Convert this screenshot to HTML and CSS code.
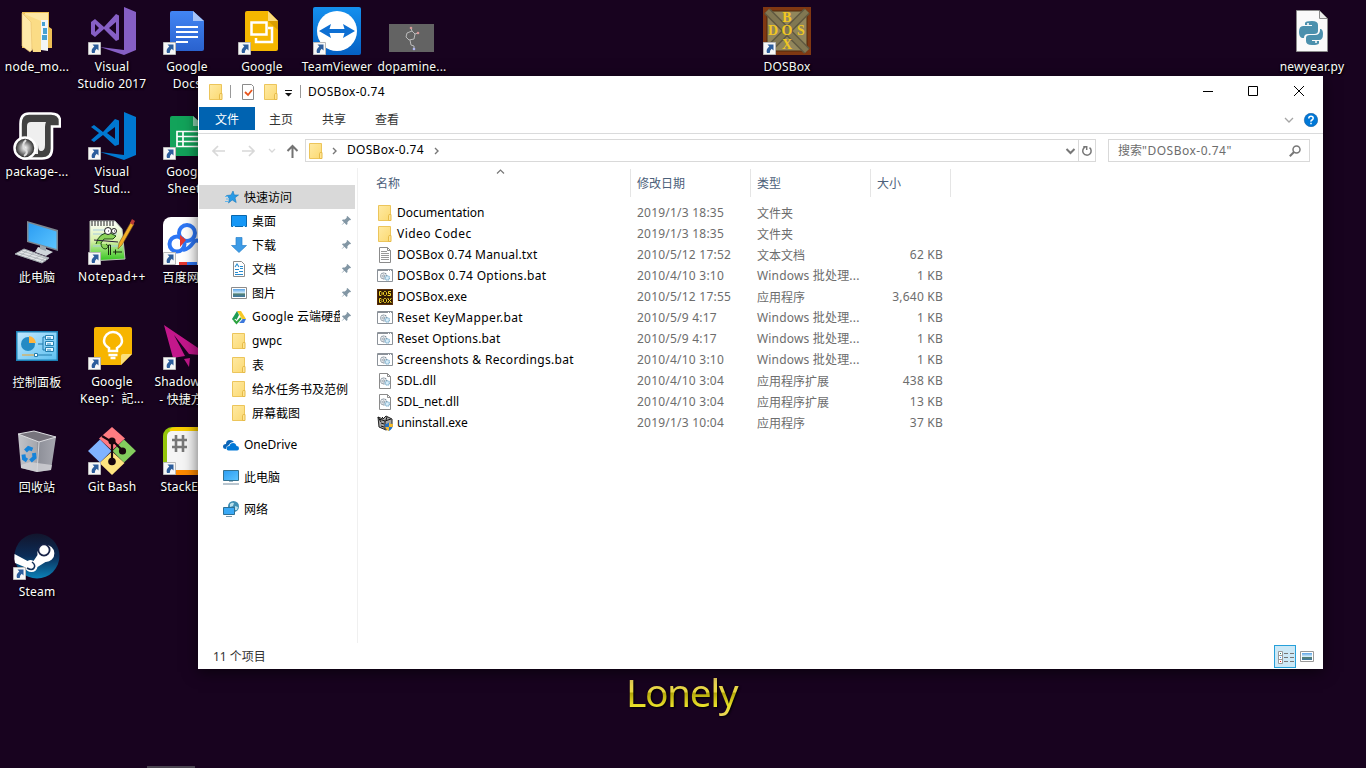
FILE: index.html
```html
<!DOCTYPE html>
<html lang="zh-CN">
<head>
<meta charset="utf-8">
<title>DOSBox-0.74</title>
<link rel="stylesheet" href="styles.css">
</head>
<body>
<svg class="defs" aria-hidden="true">
<defs>
<linearGradient id="gFold" x1="0" y1="0" x2="1" y2="1"><stop offset="0" stop-color="#ffeaa3"/><stop offset="1" stop-color="#fbd972"/></linearGradient>
<linearGradient id="gScreen" x1="0" y1="0" x2="1" y2="1"><stop offset="0" stop-color="#2b9cf2"/><stop offset="1" stop-color="#5cc5ff"/></linearGradient>
<linearGradient id="gDoc" x1="0" y1="0" x2="0" y2="1"><stop offset="0" stop-color="#4285f4"/><stop offset="1" stop-color="#2a62ce"/></linearGradient>
<linearGradient id="gTv" x1="0" y1="0" x2="0" y2="1"><stop offset="0" stop-color="#1490ee"/><stop offset="1" stop-color="#0560c4"/></linearGradient>
<linearGradient id="gSteam" x1="0" y1="0" x2="0" y2="1"><stop offset="0" stop-color="#12152c"/><stop offset=".5" stop-color="#0b2c57"/><stop offset="1" stop-color="#0b82b8"/></linearGradient>
<linearGradient id="gNpp" x1="0" y1="0" x2="0" y2="1"><stop offset="0" stop-color="#fff"/><stop offset=".5" stop-color="#d8f0a8"/><stop offset="1" stop-color="#2fc51c"/></linearGradient>
<linearGradient id="gPanel" x1="0" y1="0" x2="1" y2="1"><stop offset="0" stop-color="#bfe8ff"/><stop offset="1" stop-color="#5fc0f0"/></linearGradient>
<linearGradient id="gBin" x1="0" y1="0" x2="1" y2="0"><stop offset="0" stop-color="#c3c4c9"/><stop offset=".5" stop-color="#a5a7ae"/><stop offset=".52" stop-color="#8d8f98"/><stop offset="1" stop-color="#a6a7af"/></linearGradient>
<radialGradient id="gDisc"><stop offset="0" stop-color="#fff"/><stop offset=".45" stop-color="#999"/><stop offset="1" stop-color="#111"/></radialGradient>
<linearGradient id="gPic" x1="0" y1="0" x2="0" y2="1"><stop offset="0" stop-color="#5aa3e6"/><stop offset=".5" stop-color="#d4ecfa"/><stop offset=".6" stop-color="#55806f"/><stop offset="1" stop-color="#3f78a6"/></linearGradient>
<symbol id="arrow" viewBox="0 0 13 13"><path d="M.5.5h12v12H.5z" fill="#f7f7f7" stroke="#b9b9b9"/><path d="M4.500 2.500h6v6L8.700 6.700Q6.800 8.100 6.700 11H4q-1.400-4 2.300-6.600z" fill="#2c5d9c"/></symbol>
<symbol id="folder" viewBox="0 0 16 16"><path d="M1.500.5h12v15h-12z" fill="url(#gFold)" stroke="#ecc55b"/><path d="M11.500 15.500v-5q0-1 1.500-1h1v6z" fill="#ffe595" stroke="#e6bb48"/></symbol>
<symbol id="txt" viewBox="0 0 16 16"><path d="M2.500.5h8l3 3v12h-11z" fill="#fff" stroke="#8b8b8b"/><path d="M10.500.5v3h3" fill="none" stroke="#8b8b8b"/><path d="M4 4.500h6M4 6.500h8M4 8.500h8M4 10.500h8M4 12.500h8" stroke="#999"/></symbol>
<symbol id="gear" viewBox="0 0 10 8"><circle cx="3.800" cy="3.500" r="2.700" fill="#f4f6f8" stroke="#7d8a96" stroke-width="1.100" stroke-dasharray="1.200 .5"/><circle cx="3.800" cy="3.500" r="1" fill="none" stroke="#7d8a96" stroke-width=".7"/><circle cx="7" cy="5.300" r="2" fill="#d8ecf8" stroke="#7fb0cd" stroke-width="1.100" stroke-dasharray="1 .4"/></symbol>
<symbol id="bat" viewBox="0 0 16 16"><path d="M.5 1.500h15v12H.5z" fill="#fff" stroke="#8c9299"/><path d="M1 2.500h14" stroke="#8c9299"/><path d="M11 2.500h1M13 2.500h1" stroke="#fff"/><use href="#gear" x="2.500" y="4" width="11" height="9"/></symbol>
<symbol id="dll" viewBox="0 0 16 16"><path d="M2.500.5h8l3 3v12h-11z" fill="#fff" stroke="#8b8b8b"/><path d="M10.500.5v3h3" fill="none" stroke="#8b8b8b"/><use href="#gear" x="2.500" y="4" width="11" height="9"/></symbol>
<symbol id="dosmini" viewBox="0 0 16 16"><path d="M0 0h16v16H0z" fill="#5b2f08"/><path d="M1 1h14v14H1z" fill="#321b04"/><path d="M2.500 2.500v4h1.500l1-1v-2l-1-1zM7.500 2.500h1l1 1v2l-1 1h-1l-1-1v-2zM14 2.500h-2.500v2H13.500v2h-3M2.500 9.500v4h1.500l1-1-1-1 1-1-1-1zM7.500 9.500h1l1 1v2l-1 1h-1l-1-1v-2zM11 9v1l3 3v1M14 9v1l-3 3v1" fill="none" stroke="#f4d62a"/></symbol>
<symbol id="uninst" viewBox="0 0 16 16"><path d="M1 2l5 2 3-3 6 3v8l-6 3-7-3z" fill="#a5a5a5" stroke="#222"/><path d="M2 4l6 2 6-2M8 6v8M1 2l3 5M4 8l3 1M4 11l3 1M5 2l2 2M10 2l-1 3" stroke="#151515" fill="none"/><path d="M8 9q2 0 4-1.500Q13.500 9 16 9q0 5-4 7-4-2-4-7z" fill="#2472c8"/><path d="M12 7.500Q13.500 9 16 9l-.3 3H12zM8.300 12H12v4q-3-1-3.700-4z" fill="#f7bb2a"/></symbol>
<symbol id="pin" viewBox="0 0 12 12"><path d="M7 1l4 4-1 .8-1-.2-2 2.200.1 2L6 11 3.700 8.500 1 11 .7 10.800 3.200 8 1 5.700 2.100 4.800l2.100.1L6.300 3l-.2-1.200z" fill="#8296a4"/></symbol>
<symbol id="pc" viewBox="0 0 16 16"><path d="M.5 1.500h15v10H.5z" fill="url(#gScreen)" stroke="#35718f"/><path d="M6 12h4v1H6z" fill="#9fb9c6"/><path d="M0 15h16" stroke="#8b9eb0" stroke-width="1.200"/></symbol>
<symbol id="picture" viewBox="0 0 16 16"><path d="M.5 2.500h15v11H.5z" fill="#fff" stroke="#8b8b8b"/><path d="M2 4h12v8H2z" fill="url(#gPic)"/></symbol>
</defs>
</svg>

<main class="desktop">
  <div class="item" style="grid-area:1/1"><svg class="big" viewBox="0 0 48 48"><path d="M9 5h27v15l3 2v19H9z" fill="#eebf55"/><path d="M12 6h23v33H12z" fill="#ffe8a5"/><path d="M28 13h7v31l-7-1z" fill="#f2f5f7"/><path d="M29 15h3v4h-3zM30 21h4v6h-4zM29 28h5v5h-5z" fill="#46a1d2"/><path d="M9 6l19 8v31h-8z" fill="#fbdc86"/><path d="M9 6l9 9 1 28-2 2-8-6z" fill="#ffe9a9" stroke="#e9c069" stroke-width=".6"/></svg><p>node_mo...</p></div>
  <div class="item" style="grid-area:2/1"><svg class="big" viewBox="0 0 48 48"><path d="M16 1.500H38q9 0 9 8V14.500H39v22q0 10-10 10H11q-3.500 0-3.500-4V12q0-10.500 8.500-10.500z" fill="#424242" stroke="#fff" stroke-width="2.600"/><path d="M14 14q0-4 4-4h15q-1 2-1 5v18q0 6-4 6-3 0-3-6v9H14z" fill="#efefef"/><circle cx="12" cy="36" r="10.500" fill="url(#gDisc)" stroke="#fff" stroke-width="2.500"/><path d="M13 28q-5 5-1 9t-1 7" fill="none" stroke="#ddd" stroke-width="2"/></svg><p>package-...</p></div>
  <div class="item" style="grid-area:3/1"><svg class="big" viewBox="0 0 48 48"><path d="M14 4l31 9v21L14 25z" fill="#7c8790"/><path d="M15.500 6l28 8.500v17.500l-28-8z" fill="url(#gScreen)"/><path d="M25 30l8 2 7 3-7 4-11-4z" fill="#cfd6da"/><path d="M27 28l6 2v4l-6-2z" fill="#9ca7ad"/><path d="M11 32l25 9-7 5-27-9z" fill="#e2e4e6" stroke="#9da5aa"/><path d="M6 36l27 8M9 34l26 8M7 39l8-6M14 41l8-6M20 43l8-5M27 45l6-5" stroke="#a7aeb3" stroke-width=".8"/></svg><p class="zh">此电脑</p></div>
  <div class="item" style="grid-area:4/1"><svg class="big" viewBox="0 0 48 48"><path d="M3 9h42v30H3z" fill="#1d81b7"/><path d="M4.500 10.500h39v27h-39z" fill="url(#gPanel)"/><circle cx="15" cy="22" r="7" fill="#238ac4"/><path d="M16 21v-7q6 1 7 7z" fill="#ffb53d"/><path d="M25 22h5v-7h4M30 22v6h4" fill="none" stroke="#1c79ad"/><path d="M32.500 13.500h8v4h-8zM32.500 19.500h8v4h-8zM32.500 25.500h8v4h-8z" fill="#e9f7ff" stroke="#247fae"/><path d="M34 16h4M34 22h4M34 28h4" stroke="#1684c0"/><path d="M9 33h12" stroke="#f0a22a"/><path d="M24 33h15" stroke="#247fae"/><path d="M21.500 31.500h3v3h-3z" fill="#fff" stroke="#247fae"/></svg><p class="zh">控制面板</p></div>
  <div class="item" style="grid-area:5/1"><svg class="big" viewBox="0 0 48 48"><path d="M5 7l38 3-5 33-14 2-16-4z" fill="url(#gBin)"/><path d="M5 7l16-3 22 6-17 5z" fill="#77747d" stroke="#dddde1"/><path d="M26 15l-2 30" stroke="#d4d5da"/><path d="M8 38l9-3 22 3-1 5-14 2-16-4z" fill="#d5d6d9" opacity=".75"/><g fill="none" stroke="#1684da" stroke-width="4"><path d="M12.500 24l3-3 4 1.500"/><path d="M21 26l.500 4.500-4 3.500"/><path d="M14 33.500l-3-2-.5-4"/></g></svg><p class="zh">回收站</p></div>
  <div class="item" style="grid-area:6/1"><svg class="big" viewBox="0 -2 48 48"><circle cx="24" cy="22" r="22.500" fill="url(#gSteam)"/><path d="M1.500 20l13 7q3-2 6 0l4-6a8.500 8.500 0 1 1 8 7l-8 5q-1 5-6 5-5 0-7-5L2 29q-1-4-.5-9z" fill="#fff"/><circle cx="31" cy="16" r="5.600" fill="#fff" stroke="#172348" stroke-width="1.800"/><path d="M14 34q5 3 7 0t-2-6" fill="none" stroke="#12315a" stroke-width="1.500"/></svg><svg class="cut"><use href="#arrow"/></svg><p>Steam</p></div>

  <div class="item" style="grid-area:1/2"><svg class="big" viewBox="0 0 48 48"><path d="M36 0l12 5v38l-12 5-24-8 24 3zM3 15l4-3 9 8L28 7l3 1.500v24L28 34 16 22l-9 8-4-3zM7 17v8l4-4zM28 15l-7 6 7 6z" fill="#865fc5" fill-rule="evenodd"/></svg><svg class="cut"><use href="#arrow"/></svg><p>Visual<br>Studio 2017</p></div>
  <div class="item" style="grid-area:2/2"><svg class="big" viewBox="0 0 48 48"><path d="M36 0l12 5v38l-12 5-24-8 24 3zM3 15l3-2 9 7L27 7l4 1.500v24L27 34 15 23l-9 7-3-2 8-7zM27 15l-8 6 8 6z" fill="#0078d0" fill-rule="evenodd"/></svg><svg class="cut"><use href="#arrow"/></svg><p>Visual<br>Stud...</p></div>
  <div class="item" style="grid-area:3/2"><svg class="big" viewBox="0 0 48 48"><path d="M2 4h25l7 8 3 30-35 2z" fill="url(#gNpp)" stroke="#bac5b6"/><path d="M4 4v5M7 4v5M10 4v5M13 4v5M16 4v5M19 4v5M22 4v5M25 4v5" stroke="#222"/><path d="M5 13h23M5 17h24M5 29h27" stroke="#a7cbdf"/><path d="M8 27q3-12 14-11l6 3-3 3-9 0-3 4q0 6 5 6 4-3 0-5" fill="#8bd35a" stroke="#1b4a13"/><circle cx="20" cy="14" r="3.500" fill="#fff" stroke="#222"/><circle cx="26" cy="14" r="2.500" fill="#fff" stroke="#222"/><path d="M20 14h1M26 14h1M6 23l24 2" stroke="#2b1b3a" fill="none"/><path d="M20.500 38V28h2v10M25 35h5M27.500 32.500v5M30 35h4" stroke="#18270f" fill="none"/><path d="M43 5l3 2-12 21-4 4 1-6z" fill="#f2ad25" stroke="#755420" stroke-width=".6"/><path d="M44 2l3 2-2 4-3-2z" fill="#b83a36"/></svg><svg class="cut"><use href="#arrow"/></svg><p class="k5">Notepad++</p></div>
  <div class="item" style="grid-area:4/2"><svg class="big" viewBox="0 0 48 48"><path d="M8 5h34q2 0 2 2v25L33 43H8q-2 0-2-2V7q0-2 2-2z" fill="#f7b500"/><path d="M33 43V34q0-2 2-2h9z" fill="#fbdf7b"/><path d="M21 29v-3q-5-3-5-7a9 9 0 0 1 18 0q0 4-5 7v3zM20.500 33h9M22.500 36h5" fill="none" stroke="#fff" stroke-width="2.500"/></svg><svg class="cut"><use href="#arrow"/></svg><p>Google<br>Keep：記...</p></div>
  <div class="item" style="grid-area:5/2"><svg class="big" viewBox="0 0 48 48"><path d="M24 0l13 11.500L24 23.500 11 11.500z" fill="#ff7c82"/><path d="M36 12.500l12 11.500-12 11.500L24.500 24z" fill="#83cd5e"/><path d="M12 12.500L23.500 24 12 35.500 0 24z" fill="#80b3ff"/><path d="M24 24.500l12.500 11.500L24 48 11.500 36z" fill="#ffe680"/><path d="M14 9l10 6v19M24 13l11 11" fill="none" stroke="#17060e" stroke-width="2.200"/><circle cx="24" cy="14" r="3.600" fill="#17060e"/><circle cx="34.500" cy="24" r="3.600" fill="#17060e"/><circle cx="24" cy="34.500" r="3.800" fill="#17060e"/></svg><svg class="cut"><use href="#arrow"/></svg><p>Git Bash</p></div>

  <div class="item" style="grid-area:1/3"><svg class="big" viewBox="0 0 48 48"><path d="M9 4h21l11 10v28q0 2-2 2H9q-2 0-2-2V6q0-2 2-2z" fill="url(#gDoc)"/><path d="M30 4l11 10H30z" fill="#a6c5fa"/><path d="M13 20h22M13 25h22M13 30h22M13 35h12" stroke="#fff" stroke-width="2"/></svg><svg class="cut"><use href="#arrow"/></svg><p>Google<br>Docs</p></div>
  <div class="item" style="grid-area:2/3"><svg class="big" viewBox="0 0 48 48"><path d="M9 4h21l11 10v28q0 2-2 2H9q-2 0-2-2V6q0-2 2-2z" fill="#12a35a"/><path d="M30 4l11 10H30z" fill="#8ed1b1"/><path d="M14 19.500h22v15H14zM14 24.500h22M14 29.500h22M20 20v14" fill="none" stroke="#fff" stroke-width="1.700"/></svg><svg class="cut"><use href="#arrow"/></svg><p>Google<br>Sheets</p></div>
  <div class="item" style="grid-area:3/3"><svg class="big" viewBox="0 0 48 48"><rect width="48" height="48" rx="8" fill="#fff"/><g fill="none" stroke="#2d76f5" stroke-width="4"><circle cx="24" cy="16" r="8"/><circle cx="14" cy="27" r="7.500"/><path d="M20 33q6-1 10-7t12 3"/></g><path d="M17 18l6 5-6 7z" fill="#e33932"/><path d="M16 45h8v3h-8z" fill="#e33932"/><path d="M24 45h10v3H24z" fill="#2d76f5"/></svg><svg class="cut"><use href="#arrow"/></svg><p class="zh">百度网盘</p></div>
  <div class="item" style="grid-area:4/3"><svg class="big" viewBox="0 0 48 48"><path d="M1 3l46 31-21-2-15-19 11 21-12 2zM21 37l6-1-1 9z" fill="#c3178b"/></svg><svg class="cut"><use href="#arrow"/></svg><p>Shadowsoc<br>- <span class="zh">快捷方式</span></p></div>
  <div class="item" style="grid-area:5/3"><svg class="big" viewBox="0 0 48 48"><rect width="48" height="48" rx="9" fill="#94c50c"/><path d="M6 3Q8 0 14 0h34v6H10z" fill="#f8cd00"/><path d="M5 42h43v6H8z" fill="#ff8a00"/><rect x="4" y="4" width="48" height="39" rx="5" fill="#f5f5f5"/><path d="M13 8v17M20 8v17M9 13h15M9 20h15" stroke="#777" stroke-width="2.600"/></svg><svg class="cut"><use href="#arrow"/></svg><p>StackEdit</p></div>

  <div class="item" style="grid-area:1/4"><svg class="big" viewBox="0 0 48 48"><path d="M9 4h21l10 10v28q0 2-2 2H9q-2 0-2-2V6q0-2 2-2z" fill="#f5b700"/><path d="M30 4l10 10H30z" fill="#fbdb7a"/><path d="M30 14h10v9z" fill="#dba000"/><path d="M13.500 15.500h15v12h-15zM18 31v4h16V21h-4" fill="none" stroke="#fff" stroke-width="2.500"/></svg><svg class="cut"><use href="#arrow"/></svg><p>Google</p></div>
  <div class="item" style="grid-area:1/5"><svg class="big" viewBox="0 0 48 48"><rect width="48" height="48" rx="2" fill="url(#gTv)"/><circle cx="24" cy="24" r="20" fill="#fff"/><path d="M6 24l12-7-1.500 5h15L30 17l12 7-12 7 1.500-5h-15l1.500 5z" fill="#0d6fd3"/></svg><svg class="cut"><use href="#arrow"/></svg><p>TeamViewer</p></div>
  <div class="item" style="grid-area:1/6"><svg class="big" viewBox="0 0 48 48"><path d="M1 17h45v28H1z" fill="#636363"/><path d="M19 26l5-2 3 3-1 5-5 1-3-3zM24 24l-1-3M27 27l3-1M22 33l1 5 3 1v4" fill="none" stroke="#bbb"/><circle cx="23" cy="21" r="1.300" fill="#d79999"/><circle cx="30" cy="26" r="1.300" fill="#d79999"/><circle cx="26" cy="42" r="1.300" fill="#aeb5f3"/></svg><p>dopamine...</p></div>
  <div class="item" style="grid-area:1/11"><svg class="big" viewBox="0 0 48 48"><path d="M0 0h48v48H0z" fill="#803812"/><path d="M4 4h40v40H4z" fill="#91865c" stroke="#4f280d"/><path d="M4 4l40 40M44 4L4 44" stroke="#5f5941" stroke-width="8"/><path d="M4 4l40 40M44 4L4 44" stroke="#817752" stroke-width="5"/><g class="crate"><text x="24" y="14.500">B</text><text x="10" y="28">D</text><text x="24" y="28">O</text><text x="38" y="28">S</text><text x="24" y="42">X</text></g></svg><svg class="cut"><use href="#arrow"/></svg><p>DOSBox</p></div>
  <div class="item" style="grid-area:1/18"><svg class="big" viewBox="0 0 48 48"><path d="M8.500 3.500h22l9 9v32h-31z" fill="#fafafa" stroke="#8b8b8b"/><path d="M31.500 3.500v8h8z" fill="#ededed" stroke="#8b8b8b"/><path d="M24 14q6 0 6 4v6q0 3-4 3h-6q-4 0-4 4h-2q-3-1-3-6 0-6 4-6h9v-1h-7v-2q0-2 7-2z" fill="#4b90ad"/><path d="M24 38q-6 0-6-4v-3q0-3 4-3h5q5 0 5-5v-1h1q2 1 2 5 0 6-4 6h-7v1h7v2q0 2-7 2z" fill="#4b90ad"/><circle cx="20" cy="17" r="1" fill="#fff"/><circle cx="28" cy="35" r="1" fill="#fff"/></svg><p>newyear.py</p></div>
</main>

<div class="lyric"><span>Lonely</span></div>
<div class="peek"></div>

<section class="window">
  <header class="title">
    <svg class="i16"><use href="#folder"/></svg><i class="sep s1"></i>
    <svg class="i16 chk" viewBox="0 0 16 16"><path d="M2.500.5h9l2 2v13h-11z" fill="#fff" stroke="#8b8b8b"/><path d="M5 8l3 3 4-5" fill="none" stroke="#e8541c" stroke-width="1.800"/></svg>
    <svg class="i16 f2"><use href="#folder"/></svg>
    <svg class="drop" viewBox="0 0 8 7"><path d="M0 .5h7" stroke="#111"/><path d="M0 3h7L3.500 6.500z" fill="#111"/></svg><i class="sep s2"></i>
    <span class="cap">DOSBox-0.74</span>
    <svg class="ctl" viewBox="0 0 104 12"><path d="M0 6.500h10M45.500 1.500h9v9h-9zM91 1l10 10M101 1L91 11" fill="none" stroke="#000"/></svg>
  </header>
  <nav class="tabs zh"><b>文件</b><span>主页</span><span>共享</span><span>查看</span>
    <svg class="help" viewBox="0 0 34 14"><path d="M1 5l4 4 4-4" fill="none" stroke="#a5a5a5" stroke-width="1.300"/><circle cx="27" cy="7" r="6.700" fill="#0078d7" stroke="#155a9d" stroke-width=".6"/><path d="M24.800 5.500q0-2.200 2.200-2.200t2.200 2q0 1-1.200 1.700T27 8.700M27 9.700v1.600" fill="none" stroke="#fff" stroke-width="1.500"/></svg>
  </nav>
  <div class="bar">
    <svg class="navs" viewBox="0 0 90 16"><g fill="none" stroke="#d8d8d8" stroke-width="1.700"><path d="M14 8H2M7 3L2 8l5 5M31 8h12M38 3l5 5-5 5"/><path d="M58 6l3 3 3-3" stroke-width="1.300"/><path d="M81.500 15V3M76.500 8l5-5 5 5" stroke="#737373" stroke-width="2"/></g></svg>
    <div class="addr"><svg class="i16"><use href="#folder"/></svg><svg class="chev" viewBox="0 0 5 8"><path d="M1 1l3 3-3 3" fill="none" stroke="#777" stroke-width="1.400"/></svg><span>DOSBox-0.74</span><svg class="chev" viewBox="0 0 5 8"><path d="M1 1l3 3-3 3" fill="none" stroke="#777" stroke-width="1.400"/></svg>
      <svg class="ref" viewBox="0 0 31 21"><path d="M2.500 9l4 4 4-4" fill="none" stroke="#777" stroke-width="2"/><path d="M14.500 0v21" stroke="#d9d9d9"/><path d="M25.500 7.600A4.200 4.200 0 1 1 21 7.200M19.300 6.700h3.400v3.400" fill="none" stroke="#777" stroke-width="1.500"/></svg></div>
    <div class="search"><span><span class="zh">搜索</span>"DOSBox-0.74"</span><svg viewBox="0 0 12 12"><circle cx="7.500" cy="4.500" r="3.500" fill="none" stroke="#777" stroke-width="1.500"/><path d="M5 7L.8 11.200" stroke="#777" stroke-width="2"/></svg></div>
  </div>
  <div class="body">
    <aside class="side">
      <div class="row root sel"><svg class="i16" viewBox="0 0 16 16"><path d="M10 2l1.300 4H15.500l-3.500 2.700 1.200 4.800-4-2.500L5.500 14l1-4.600L3.500 6.500l4.500-.5z" fill="#289ae6" stroke="#1678bd" stroke-width=".6"/><path d="M2 7.500h3M3 10h3M2 12.500h3" stroke="#63b7ec"/></svg><span class="zh">快速访问</span></div>
      <div class="row"><svg class="i16" viewBox="0 0 16 16"><path d="M.5 2.500h15v11H.5z" fill="#1597f6" stroke="#0967ad"/><path d="M2 13.500h12" stroke="#b6e5ff" stroke-dasharray="2 8 2"/></svg><span class="zh">桌面</span><svg class="pin"><use href="#pin"/></svg></div>
      <div class="row"><svg class="i16" viewBox="0 0 16 16"><path d="M5 .5h6v8h4.500L8 15.500.5 8.500H5z" fill="#3d9be6" stroke="#2a81cc" stroke-width=".7"/></svg><span class="zh">下载</span><svg class="pin"><use href="#pin"/></svg></div>
      <div class="row"><svg class="i16" viewBox="0 0 16 16"><path d="M2.500.5h8l3 3v12h-11z" fill="#fff" stroke="#8b8b8b"/><path d="M4 6l2-3 2 3M4 8.500h4M9 7.500h3M4 11.500h3M8 10.500h4M4 13.500h8M9 5.500h3" fill="none" stroke="#278bce" stroke-width="1.100"/></svg><span class="zh">文档</span><svg class="pin"><use href="#pin"/></svg></div>
      <div class="row"><svg class="i16"><use href="#picture"/></svg><span class="zh">图片</span><svg class="pin"><use href="#pin"/></svg></div>
      <div class="row"><svg class="i16" viewBox="0 0 16 16"><path d="M6 2h4l5 8h-4z" fill="#f6c927"/><path d="M6 2l2 4-4 8-3-4z" fill="#1d9b55"/><path d="M7 10h8l-2 4H5z" fill="#3d78dc"/><path d="M3 11l2.500 3L10 9" fill="none" stroke="#fff" stroke-width="4"/><path d="M3 11l2.500 3L10 9" fill="none" stroke="#2da33f" stroke-width="2"/></svg><span class="cloud">Google <span class="zh">云端硬盘</span></span><svg class="pin"><use href="#pin"/></svg></div>
      <div class="row"><svg class="i16"><use href="#folder"/></svg><span>gwpc</span></div>
      <div class="row"><svg class="i16"><use href="#folder"/></svg><span class="zh">表</span></div>
      <div class="row"><svg class="i16"><use href="#folder"/></svg><span class="zh">给水任务书及范例</span></div>
      <div class="row"><svg class="i16"><use href="#folder"/></svg><span class="zh">屏幕截图</span></div>
      <div class="row root gap"><svg class="i16" viewBox="0 0 16 16"><path d="M3 12Q0 12 0 9.500 0 7 3 7q0-4 4-4 2.500 0 4 2Q7 5 6 8q-3 1-3 4z" fill="#0b65b8"/><path d="M5.500 13.500q-2 0-2-2.300T6.500 9q.5-3 3.700-3 2.500 0 3.300 3 2.500 0 2.500 2.300t-2 2.200z" fill="#0078d7"/></svg><span>OneDrive</span></div>
      <div class="row root gap"><svg class="i16"><use href="#pc"/></svg><span class="zh">此电脑</span></div>
      <div class="row root gap"><svg class="i16" viewBox="0 0 16 16"><circle cx="10.500" cy="5.500" r="5.500" fill="#3f8fb3"/><path d="M7 3q2-2 4-1l-1 3-3 1zM12 5l3 1-1 3h-2z" fill="#b9e0ec"/><path d="M.5 6.500h11v7H.5z" fill="#3aa9f5" stroke="#2d6f95"/><path d="M3 15.500h6" stroke="#7796a8"/></svg><span class="zh">网络</span></div>
    </aside>
    <div class="files">
      <div class="head zh"><span class="n">名称<svg viewBox="0 0 9 5"><path d="M1 4.500L4.500 1 8 4.500" fill="none" stroke="#777" stroke-width="1.200"/></svg></span><span>修改日期</span><span>类型</span><span>大小</span></div>
      <div class="list">
      <div class="f"><svg class="i16"><use href="#folder"/></svg><b class="k0">Documentation</b><i>2019/1/3 18:35</i><span class="zh">文件夹</span><em></em></div>
      <div class="f"><svg class="i16"><use href="#folder"/></svg><b class="k5">Video Codec</b><i>2019/1/3 18:35</i><span class="zh">文件夹</span><em></em></div>
      <div class="f"><svg class="i16"><use href="#txt"/></svg><b class="k2">DOSBox 0.74 Manual.txt</b><i>2010/5/12 17:52</i><span class="zh">文本文档</span><em>62 KB</em></div>
      <div class="f"><svg class="i16"><use href="#bat"/></svg><b class="k3">DOSBox 0.74 Options.bat</b><i>2010/4/10 3:10</i><span class="k2">Windows 批处理...</span><em>1 KB</em></div>
      <div class="f"><svg class="i16"><use href="#dosmini"/></svg><b class="k2">DOSBox.exe</b><i>2010/5/12 17:55</i><span class="zh">应用程序</span><em>3,640 KB</em></div>
      <div class="f"><svg class="i16"><use href="#bat"/></svg><b class="k4">Reset KeyMapper.bat</b><i>2010/5/9 4:17</i><span class="k2">Windows 批处理...</span><em>1 KB</em></div>
      <div class="f"><svg class="i16"><use href="#bat"/></svg><b class="k2">Reset Options.bat</b><i>2010/5/9 4:17</i><span class="k2">Windows 批处理...</span><em>1 KB</em></div>
      <div class="f"><svg class="i16"><use href="#bat"/></svg><b class="k3">Screenshots &amp; Recordings.bat</b><i>2010/4/10 3:10</i><span class="k2">Windows 批处理...</span><em>1 KB</em></div>
      <div class="f"><svg class="i16"><use href="#dll"/></svg><b>SDL.dll</b><i>2010/4/10 3:04</i><span class="zh">应用程序扩展</span><em>438 KB</em></div>
      <div class="f"><svg class="i16"><use href="#dll"/></svg><b class="k0">SDL_net.dll</b><i>2010/4/10 3:04</i><span class="zh">应用程序扩展</span><em>13 KB</em></div>
      <div class="f"><svg class="i16"><use href="#uninst"/></svg><b class="k0">uninstall.exe</b><i>2019/1/3 10:04</i><span class="zh">应用程序</span><em>37 KB</em></div>
      </div>
    </div>
  </div>
  <footer class="status"><span>11 <span class="zh">个项目</span></span>
    <div class="views"><div class="on"><svg viewBox="0 0 16 14"><path d="M.5.500h4v12h-4zM.5 4.500h4M.5 8.500h4" fill="#fff" stroke="#999"/><path d="M6 2.500h4M12 2.500h4M6 6.500h4M12 6.500h4M6 10.500h4M12 10.500h4" stroke="#777"/><path d="M2 2.500h1" stroke="#297d6d"/><path d="M2 6.500h1" stroke="#39f"/><path d="M2 10.500h1" stroke="#d22"/></svg></div><svg class="thumb" viewBox="0 0 14 11"><path d="M.5.500h13v10H.5z" fill="#fff" stroke="#999"/><path d="M2 2h10v7H2z" fill="url(#gPic)"/></svg></div>
  </footer>
</section>
</body>
</html>
```
FILE: styles.css
```css
* { box-sizing: border-box; }
body {
  margin: 0;
  width: 1366px;
  height: 768px;
  overflow: hidden;
  position: relative;
  background: #18031f;
  font: 12px/17px "Noto Sans", "Noto Sans CJK SC", sans-serif;
  color: #000;
}
svg { display: block; flex: none; }
b, i, em { font-weight: normal; font-style: normal; }
.zh { font-family: "Noto Sans CJK SC", sans-serif; letter-spacing: 0; }
.defs { position: absolute; width: 0; height: 0; }

/* desktop icons */
.desktop {
  display: grid;
  grid-template-columns: repeat(18, 75px);
  grid-template-rows: repeat(7, 105px);
}
.item {
  position: relative;
  display: flex;
  flex-direction: column;
  align-items: center;
  padding: 7px 1px 0 0;
}
.big { width: 48px; height: 48px; }
.cut { position: absolute; left: 13px; top: 42px; width: 13px; height: 13px; }
.item p {
  margin: 3px 0 0;
  color: #fff;
  text-align: center;
  white-space: nowrap;
  letter-spacing: .2px;
  text-shadow: 1px 1px 2px #000, 0 1px 2px #000;
}
.item p.k5 { letter-spacing: .6px; }
.crate { font: bold 14px "Liberation Serif", serif; fill: #f0c722; text-anchor: middle; }

.lyric {
  position: absolute;
  left: 623px;
  top: 666px;
  font-size: 39px;
  line-height: 52px;
  letter-spacing: -1.500px;
  filter: drop-shadow(1px 1px 1px #000);
}
.lyric span {
  display: inline-block;
  padding: 0 3px;
  background: linear-gradient(#ecd060 20%, #e8d840 50%, #b3a60a 52%, #ece32c 78%, #e9d25c 96%);
  -webkit-background-clip: text;
  background-clip: text;
  color: transparent;
}
.peek { position: absolute; left: 147px; bottom: 0; width: 48px; height: 2px; background: #4a4450; }

/* explorer window */
.window {
  position: absolute;
  left: 198px;
  top: 76px;
  width: 1125px;
  height: 593px;
  background: #fff;
  display: flex;
  flex-direction: column;
  box-shadow: 0 3px 14px rgba(0, 0, 0, .6);
}
.i16 { width: 16px; height: 16px; }
.title { height: 31px; display: flex; align-items: center; padding: 0 16px 0 10px; }
.sep { width: 1px; height: 13px; background: #999; }
.s1 { margin: 0 9px 0 6px; }
.f2 { margin-left: 7px; }
.drop { width: 8px; height: 7px; margin: 3px 7px 0 6px; }
.cap { margin-left: 7px; letter-spacing: .3px; }
.ctl { width: 104px; height: 12px; margin: -1px 0 0 auto; }
.tabs { height: 27px; display: flex; border-bottom: 1px solid #dadbdc; color: #333; }
.tabs b { width: 56px; margin-left: 1px; height: 23px; background: #0063b1; color: #fff; text-align: center; line-height: 23px; }
.tabs span { margin-left: 14px; width: 39px; line-height: 23px; }
.help { width: 34px; height: 14px; margin: 6px 5px 0 auto; }
.bar { height: 34px; display: flex; padding: 5px 13px 0; }
.navs { width: 90px; height: 16px; margin-top: 4px; }
.addr { width: 791px; height: 23px; margin-left: 4px; border: 1px solid #d9d9d9; display: flex; align-items: center; padding-left: 2px; }
.addr .chev { width: 5px; height: 8px; margin-left: 8px; }
.addr span { margin: -2px 0 0 10px; letter-spacing: .3px; }
.addr span + .chev { margin-left: 10px; }
.ref { width: 31px; height: 21px; margin-left: auto; }
.search { width: 202px; height: 23px; margin-left: 12px; border: 1px solid #d9d9d9; display: flex; align-items: center; justify-content: space-between; padding: 0 8px; color: #6d6d6d; }
.search > span { letter-spacing: .5px; margin-top: -1px; padding-left: 1px; }
.search svg { width: 12px; height: 12px; }
.body { flex: 1; display: flex; min-height: 0; }
.side { width: 160px; border-right: 1px solid #f0f0f0; padding: 17px 2px 0 1px; }
.row { height: 24px; display: flex; align-items: center; padding-left: 32px; position: relative; white-space: nowrap; }
.row > span { margin: -2px 0 0 5px; }
.row.root { padding-left: 24px; }
.sel { background: #d9d9d9; }
.gap { margin-top: 8px; }
.cloud { width: 88px; overflow: hidden; letter-spacing: .2px; }
.pin { position: absolute; right: 3px; top: 6px; width: 11px; height: 11px; }
.files { padding-left: 18px; }
.head { display: flex; color: #4c607a; height: 28px; line-height: 27px; margin-top: 1px; }
.head span { width: 120px; padding-left: 6px; border-right: 1px solid #e5e5e5; }
.head .n { width: 255px; padding-left: 0; position: relative; }
.head span:last-child { width: 80px; }
.head svg { position: absolute; left: 120px; top: 0; width: 9px; height: 5px; }
.list { padding: 5px 0 0 1px; }
.f { height: 21px; display: grid; grid-template-columns: 16px 244px 120px 110px 76px; align-items: center; color: #6d6d6d; white-space: nowrap; }
.f b { color: #000; padding-left: 4px; letter-spacing: .1px; }
.f i, .f em { letter-spacing: .22px; }
.f em { text-align: right; }
.f .zh { margin-top: -1px; }
.f .k0 { letter-spacing: -.02px; }
.f .k2 { letter-spacing: .18px; }
.f .k3 { letter-spacing: .31px; }
.f .k4 { letter-spacing: .42px; }
.f .k5 { letter-spacing: .46px; }
.status { height: 26px; display: flex; justify-content: space-between; padding-left: 15px; color: #333; line-height: 26px; }
.views { display: flex; align-items: center; padding-right: 9px; }
.on { width: 22px; height: 23px; background: #cce8f6; border: 1px solid #26a0da; padding: 5px 0 0 3px; margin-right: 4px; }
.on svg { width: 16px; height: 14px; }
.thumb { width: 14px; height: 11px; }
```
